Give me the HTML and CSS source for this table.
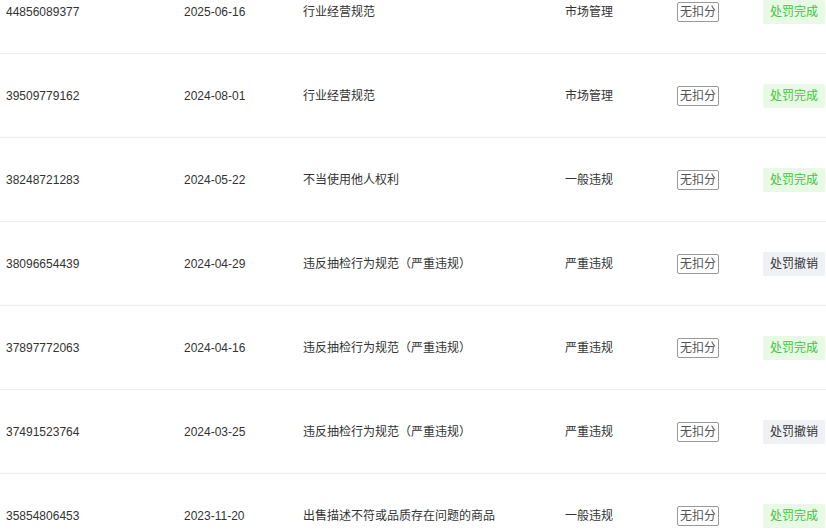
FILE: index.html
```html
<!DOCTYPE html>
<html lang="zh-CN">
<head>
  <meta charset="UTF-8" />
  <meta name="viewport" content="width=device-width, initial-scale=1.0"/>
  <title>违规记录</title>
  <link rel="stylesheet" href="styles.css">
</head>
<body>

  <div class="records">

    <div class="row">
      <div class="cell">44856089377</div>
      <div class="cell">2025-06-16</div>
      <div class="cell">行业经营规范</div>
      <div class="cell">市场管理</div>
      <div class="cell"><span class="score">无扣分</span></div>
      <div class="cell"><span class="status done">处罚完成</span></div>
    </div>

    <div class="row">
      <div class="cell">39509779162</div>
      <div class="cell">2024-08-01</div>
      <div class="cell">行业经营规范</div>
      <div class="cell">市场管理</div>
      <div class="cell"><span class="score">无扣分</span></div>
      <div class="cell"><span class="status done">处罚完成</span></div>
    </div>

    <div class="row">
      <div class="cell">38248721283</div>
      <div class="cell">2024-05-22</div>
      <div class="cell">不当使用他人权利</div>
      <div class="cell">一般违规</div>
      <div class="cell"><span class="score">无扣分</span></div>
      <div class="cell"><span class="status done">处罚完成</span></div>
    </div>

    <div class="row">
      <div class="cell">38096654439</div>
      <div class="cell">2024-04-29</div>
      <div class="cell">违反抽检行为规范（严重违规）</div>
      <div class="cell">严重违规</div>
      <div class="cell"><span class="score">无扣分</span></div>
      <div class="cell"><span class="status revoked">处罚撤销</span></div>
    </div>

    <div class="row">
      <div class="cell">37897772063</div>
      <div class="cell">2024-04-16</div>
      <div class="cell">违反抽检行为规范（严重违规）</div>
      <div class="cell">严重违规</div>
      <div class="cell"><span class="score">无扣分</span></div>
      <div class="cell"><span class="status done">处罚完成</span></div>
    </div>

    <div class="row">
      <div class="cell">37491523764</div>
      <div class="cell">2024-03-25</div>
      <div class="cell">违反抽检行为规范（严重违规）</div>
      <div class="cell">严重违规</div>
      <div class="cell"><span class="score">无扣分</span></div>
      <div class="cell"><span class="status revoked">处罚撤销</span></div>
    </div>

    <div class="row">
      <div class="cell">35854806453</div>
      <div class="cell">2023-11-20</div>
      <div class="cell">出售描述不符或品质存在问题的商品</div>
      <div class="cell">一般违规</div>
      <div class="cell"><span class="score">无扣分</span></div>
      <div class="cell"><span class="status done">处罚完成</span></div>
    </div>

  </div>

</body>
</html>
```

FILE: styles.css
```css
body {
  margin: 0;
  background: #fff;
  color: #333;
  font-family: "Liberation Sans", "Noto Sans CJK SC", sans-serif;
  font-size: 12px;
  overflow: hidden;
}

/* list is scrolled, first row partly out of view */
.records {
  margin-top: -30px;
}

.row {
  display: grid;
  grid-template-columns: 178px 119px 262px 112px 86px 1fr;
  align-items: center;
  height: 83px;
  border-bottom: 1px solid #ececec;
}

.cell {
  padding-left: 6px;
  white-space: nowrap;
  line-height: 18px;
}

.score {
  display: inline-block;
  border: 1px solid #999;
  border-radius: 2px;
  padding: 0 2px;
  line-height: 18px;
  color: #555;
}

.status {
  display: inline-block;
  padding: 0 7px;
  line-height: 24px;
  border-radius: 2px;
}

.status.done {
  background: #e8f9e6;
  color: #3fc53a;
}

.status.revoked {
  background: #f0f1f5;
  color: #333;
}
```
